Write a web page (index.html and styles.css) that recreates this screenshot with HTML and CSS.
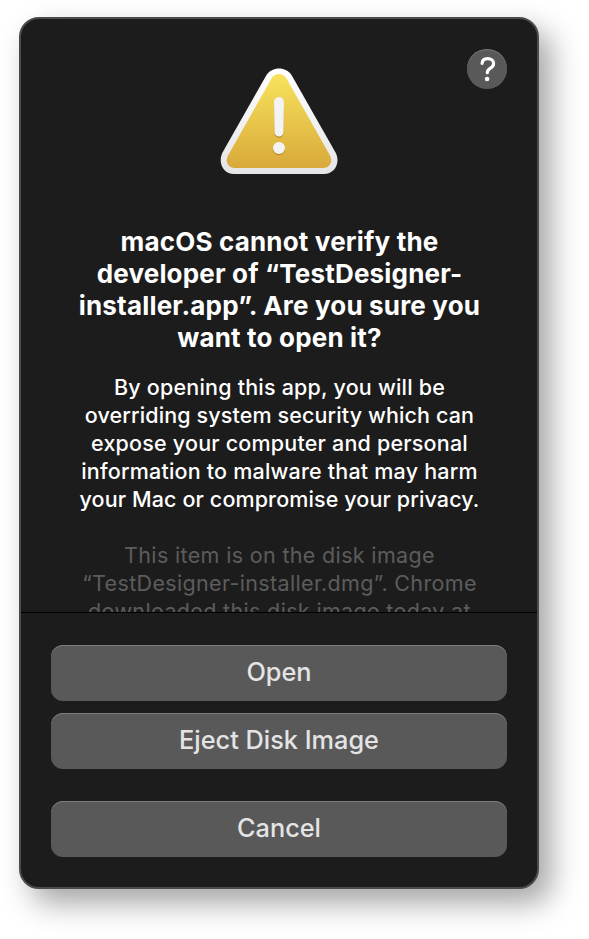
FILE: index.html
```html
<!DOCTYPE html>
<html lang="en">
<head>
<meta charset="utf-8">
<title>Verify developer</title>
<link rel="stylesheet" href="styles.css">
</head>
<body>
<main class="dialog">
  <section class="content">
    <button class="help" aria-label="Help">
      <svg width="40" height="40" viewBox="0 0 40 40"><path d="M15.100 14.400C15.300 11.500 17.300 9.700 20.700 9.700C24.100 9.700 26.600 11.600 26.600 14.500C26.600 16.700 25.500 18 23.500 19.200C21.200 20.600 20.300 21.600 20.300 23.700" fill="none" stroke="#fff" stroke-width="3.2" stroke-linecap="round" stroke-linejoin="round"/><circle cx="20.100" cy="30" r="2.300" fill="#fff"/></svg>
    </button>
    <svg class="warning" width="120" height="110" viewBox="0 0 120 110">
      <defs>
        <linearGradient id="gold" x1="0" y1="0" x2="0" y2="1"><stop offset="0" stop-color="#f8e35c"/><stop offset="1" stop-color="#d8a93a"/></linearGradient>
        <linearGradient id="rim" x1="0" y1="0" x2="0" y2="1"><stop offset="0" stop-color="#fff"/><stop offset="1" stop-color="#e5e5e8"/></linearGradient>
      </defs>
      <path d="M46.500 8C52 -.7 66 -.7 71.500 8L115.500 85.500C121 96 114.500 107 104 107H14C3.500 107 -2.500 96 2.500 85.500Z" fill="url(#rim)"/>
      <path d="M51.500 11.500C54.500 5.500 63.500 5.500 66.500 11.500L110 88.500C113.500 95 109.500 101 103 101H15C8.500 101 4.500 95 8 88.500Z" fill="url(#gold)"/>
      <g fill="#b98a24" transform="translate(0 1.200)"><path d="M54 35a5 5 0 0 1 10 0L63.500 65a4.500 4.500 0 0 1-9 0Z"/><circle cx="59" cy="81" r="6"/></g>
      <g fill="#f3f3f3"><path d="M54 35a5 5 0 0 1 10 0L63.500 65a4.500 4.500 0 0 1-9 0Z"/><circle cx="59" cy="81" r="6"/></g>
    </svg>
    <h1 class="title">
      <span class="line">macOS cannot verify the</span>
      <span class="line">developer of “TestDesigner-</span>
      <span class="line">installer.app”. Are you sure you</span>
      <span class="line">want to open it?</span>
    </h1>
    <p class="message">
      <span class="line">By opening this app, you will be</span>
      <span class="line tight">overriding system security which can</span>
      <span class="line">expose your computer and personal</span>
      <span class="line">information to malware that may harm</span>
      <span class="line tight">your Mac or compromise your privacy.</span>
    </p>
    <p class="message origin">
      <span class="line">This item is on the disk image</span>
      <span class="line">“TestDesigner-installer.dmg”. Chrome</span>
      <span class="line">downloaded this disk image today at</span>
    </p>
  </section>
  <section class="actions">
    <button class="action">Open</button>
    <button class="action">Eject Disk Image</button>
    <button class="action cancel">Cancel</button>
  </section>
</main>
</body>
</html>
```
FILE: styles.css
```css
* { box-sizing: border-box; }
body {
  margin: 0;
  height: 939px;
  overflow: hidden;
  padding: 17px 0 0 19px;
  background: #fff;
  font-family: Inter, "Liberation Sans", sans-serif;
}
.dialog {
  width: 520px;
  height: 872px;
  border: 2px solid #4b4b4b;
  border-radius: 20px;
  background: #1c1c1c;
  box-shadow: 12px 14px 30px rgba(0, 0, 0, .36);
  display: flex;
  flex-direction: column;
}
.content {
  position: relative;
  height: 593px;
  flex: none;
  padding-top: 48px;
  overflow: hidden;
  text-align: center;
  color: #fff;
}
.help {
  position: absolute;
  top: 30px;
  right: 30px;
  width: 40px;
  height: 40px;
  padding: 0;
  border: 0;
  border-radius: 50%;
  background: #595959;
  box-shadow: inset 0 1px 0 #747474;
}
.help svg, .warning { display: block; }
.warning { margin: 0 0 0 199px; }
.line { display: block; white-space: nowrap; }
.title {
  margin: 49px 0 0;
  padding-left: 1px;
  font-size: 26px;
  line-height: 32px;
  font-weight: 700;
  letter-spacing: .18px;
}
.message {
  margin: 19px 0 0;
  padding-left: 1px;
  font-size: 21.5px;
  line-height: 28px;
  font-weight: 500;
  letter-spacing: .2px;
}
.tight { letter-spacing: .12px; }
.origin {
  margin-top: 28px;
  color: #5c5c5c;
  font-weight: 400;
  letter-spacing: .34px;
}
.actions {
  flex: 1;
  border-top: 1px solid #000;
  padding: 32px 30px 0;
  display: flex;
  flex-direction: column;
  gap: 12px;
}
.action {
  height: 56px;
  padding: 0 0 2px;
  border: 0;
  border-radius: 12px;
  background: #595959;
  box-shadow: inset 0 1px 0 #7c7c7c;
  color: #e4e4e4;
  font: 500 25.3px/54px Inter, "Liberation Sans", sans-serif;
}
.cancel { margin-top: 20px; }
```
